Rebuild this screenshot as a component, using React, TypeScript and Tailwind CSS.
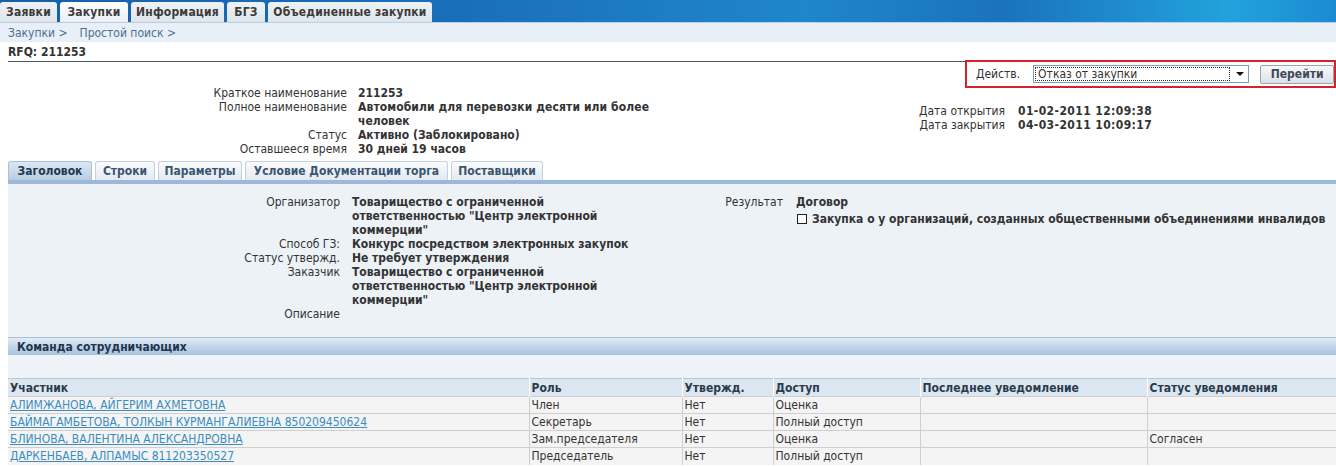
import React, { JSX } from 'react';

// ==================== Data ====================
const topTabs = [
  { label: 'Заявки', w: 'w-[57px]', active: false },
  { label: 'Закупки', w: 'w-[68px]', active: true },
  { label: 'Информация', w: 'w-[93px]', active: false },
  { label: 'БГЗ', w: 'w-[38px]', active: false },
  { label: 'Объединенные закупки', w: 'w-[164px]', active: false },
];

const subTabs = [
  { label: 'Заголовок', w: 'w-[84px]', active: true },
  { label: 'Строки', w: 'w-[60px]', active: false },
  { label: 'Параметры', w: 'w-[84px]', active: false },
  { label: 'Условие Документации торга', w: 'w-[203px]', active: false },
  { label: 'Поставщики', w: 'w-[92px]', active: false },
];

const members = [
  { name: 'АЛИМЖАНОВА, АЙГЕРИМ АХМЕТОВНА', role: 'Член', ok: 'Нет', access: 'Оценка', last: '', status: '' },
  { name: 'БАЙМАГАМБЕТОВА, ТОЛКЫН КУРМАНГАЛИЕВНА 850209450624', role: 'Секретарь', ok: 'Нет', access: 'Полный доступ', last: '', status: '' },
  { name: 'БЛИНОВА, ВАЛЕНТИНА АЛЕКСАНДРОВНА', role: 'Зам.председателя', ok: 'Нет', access: 'Оценка', last: '', status: 'Согласен' },
  { name: 'ДАРКЕНБАЕВ, АЛПАМЫС 811203350527', role: 'Председатель', ok: 'Нет', access: 'Полный доступ', last: '', status: '' },
];

const font = "font-['DejaVu_Sans_Condensed','DejaVu_Sans','Liberation_Sans',sans-serif]";

export default function App(): JSX.Element {
  return (
    <div className={`w-[1336px] h-[467px] overflow-hidden bg-white text-[12px] leading-[14px] text-[#333] ${font}`}>
      {/* Top tab bar */}
      <div className="h-[23px] flex items-end bg-[linear-gradient(90deg,#1560a9_0%,#1a6fba_35%,#1f86cc_60%,#1a72bd_75%,#22a2dd_92%,#1b8bd0_100%)] border-b border-[#b9cfe3]">
        <div className="flex gap-[3px] h-[20px]">
          {topTabs.map((t) => (
            <div
              key={t.label}
              className={`${t.w} h-full flex items-center justify-center font-bold text-[#3b3b3b] tracking-[0.2px] rounded-t-[3px] ${
                t.active
                  ? 'bg-[linear-gradient(#ffffff,#e9eff5)]'
                  : 'bg-[linear-gradient(#eef2f6,#dde5ec)]'
              }`}
            >
              {t.label}
            </div>
          ))}
        </div>
      </div>

      {/* Breadcrumb */}
      <div className="h-[19px] bg-[#e8eff6] flex items-center pl-[8px] text-[#4b6f95]">
        <span>Закупки &gt;</span>
        <span className="ml-[12px]">Простой поиск &gt;</span>
      </div>

      {/* RFQ title */}
      <div className="ml-[8px] h-[20px] flex items-center font-bold text-[#333] border-b border-[#4d5c6a]">
        RFQ: 211253
      </div>

      {/* Action box */}
      <div className="flex justify-end -mt-[2px]">
        <div className="w-[371px] h-[28px] border-2 border-[#d2232f] flex items-center pl-[9px]">
          <span className="text-[#333]">Действ.</span>
          <div className="ml-[13px] w-[217px] h-[18px] border border-[#7f9db9] bg-white flex items-center">
            <span className="flex-1 mx-[1px] h-[14px] border border-dotted border-[#333] pl-[2px] leading-[12px]">Отказ от закупки</span>
            <span className="w-[17px] h-full flex items-center justify-center">
              <svg width="8" height="4" viewBox="0 0 8 4"><path d="M0 0h8L4 4z" fill="#111" /></svg>
            </span>
          </div>
          <button className="ml-[11px] w-[74px] h-[19px] border border-[#97a4b1] rounded-[2px] bg-[linear-gradient(#f7f8fa,#dde1e6)] font-bold text-[#3c4b5a]">
            Перейти
          </button>
        </div>
      </div>

      {/* Summary info */}
      <div className="flex -mt-[2px] h-[70px]">
        <div className="grid grid-cols-[347px_300px] gap-x-[11px] auto-rows-[14px]">
          <span className="text-right">Краткое наименование</span>
          <span className="font-bold">211253</span>
          <span className="text-right">Полное наименование</span>
          <span className="font-bold whitespace-nowrap tracking-[0.1px]">Автомобили для перевозки десяти или более</span>
          <span />
          <span className="font-bold">человек</span>
          <span className="text-right">Статус</span>
          <span className="font-bold">Активно (Заблокировано)</span>
          <span className="text-right">Оставшееся время</span>
          <span className="font-bold">30 дней 19 часов</span>
        </div>
        <div className="grid grid-cols-[347px_auto] gap-x-[13px] auto-rows-[14px] mt-[18px] h-fit">
          <span className="text-right">Дата открытия</span>
          <span className="font-bold tracking-[0.4px]">01-02-2011 12:09:38</span>
          <span className="text-right">Дата закрытия</span>
          <span className="font-bold tracking-[0.4px]">04-03-2011 10:09:17</span>
        </div>
      </div>

      {/* Sub tabs */}
      <div className="ml-[8px] mt-[5px]">
        <div className="flex gap-[3px] h-[19px]">
          {subTabs.map((t) => (
            <div
              key={t.label}
              className={`${t.w} h-full flex items-center justify-center font-bold rounded-t-[3px] border border-b-0 ${
                t.active
                  ? 'bg-[linear-gradient(#dce7f2,#b7cde3)] border-[#a9c0d8] text-[#22384f]'
                  : 'bg-[linear-gradient(#fbfcfd,#e2e9f0)] border-[#c3d0dd] text-[#3a5570]'
              }`}
            >
              {t.label}
            </div>
          ))}
        </div>
        <div className="h-[4px] bg-[#9cbad8]" />

        {/* Header panel */}
        <div className="bg-[#edf2f7] h-[153px] pt-[11px] flex">
          <div className="grid grid-cols-[332px_290px] gap-x-[12px] auto-rows-[14px] h-fit">
            <span className="text-right">Организатор</span>
            <span className="font-bold whitespace-nowrap">Товарищество с ограниченной</span>
            <span />
            <span className="font-bold whitespace-nowrap">ответственностью "Центр электронной</span>
            <span />
            <span className="font-bold">коммерции"</span>
            <span className="text-right">Способ ГЗ:</span>
            <span className="font-bold whitespace-nowrap">Конкурс посредством электронных закупок</span>
            <span className="text-right">Статус утвержд.</span>
            <span className="font-bold">Не требует утверждения</span>
            <span className="text-right">Заказчик</span>
            <span className="font-bold whitespace-nowrap">Товарищество с ограниченной</span>
            <span />
            <span className="font-bold whitespace-nowrap">ответственностью "Центр электронной</span>
            <span />
            <span className="font-bold">коммерции"</span>
            <span className="text-right">Описание</span>
            <span />
          </div>
          <div className="grid grid-cols-[141px_auto] gap-x-[13px] h-fit">
            <span className="text-right h-[14px]">Результат</span>
            <span className="font-bold h-[14px]">Договор</span>
            <span />
            <span className="font-bold whitespace-nowrap flex items-center mt-[3px] h-[14px]">
              <span className="inline-block w-[10px] h-[10px] border border-[#222] bg-white mr-[5px] ml-[1px]" />
              Закупка о у организаций, созданных общественными объединениями инвалидов
            </span>
          </div>
        </div>

        {/* Team section */}
        <div className="h-[18px] border-t border-[#a9c0d7] bg-[linear-gradient(#e4edf6,#c5d7e9_45%,#a8c3de)] flex items-center pl-[9px] font-bold text-[#21364d]">
          Команда сотрудничающих
        </div>
        <div className="h-[23px] bg-[#eef3f8]" />

        <table className="w-[1328px] border-collapse table-fixed">
          <colgroup>
            <col className="w-[521px]" />
            <col className="w-[153px]" />
            <col className="w-[91px]" />
            <col className="w-[147px]" />
            <col className="w-[227px]" />
            <col />
          </colgroup>
          <thead>
            <tr className="h-[18px] bg-[#dce6f0] border-t border-[#b5c7d9]">
              {['Участник', 'Роль', 'Утвержд.', 'Доступ', 'Последнее уведомление', 'Статус уведомления'].map((h) => (
                <th key={h} className="text-left font-bold text-[#2a3b4c] px-[2px] border-l border-[#ffffff] first:border-l-0">
                  {h}
                </th>
              ))}
            </tr>
          </thead>
          <tbody>
            {members.map((m) => (
              <tr key={m.name} className="h-[17px] bg-[#f4f4f4] border-t border-[#cfcfcf]">
                <td className="px-[2px] whitespace-nowrap">
                  <a href="#" className="text-[#3a8cc1] underline">{m.name}</a>
                </td>
                <td className="px-[2px] border-l border-[#cfcfcf]">{m.role}</td>
                <td className="px-[2px] border-l border-[#cfcfcf]">{m.ok}</td>
                <td className="px-[2px] border-l border-[#cfcfcf]">{m.access}</td>
                <td className="px-[2px] border-l border-[#cfcfcf]">{m.last}</td>
                <td className="px-[2px] border-l border-[#cfcfcf]">{m.status}</td>
              </tr>
            ))}
          </tbody>
        </table>
      </div>
    </div>
  );
}
